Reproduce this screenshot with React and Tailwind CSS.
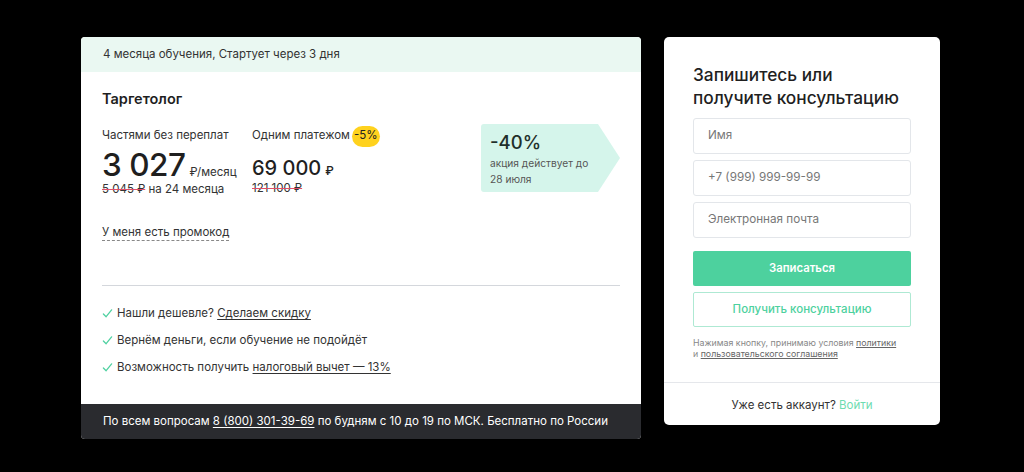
import React from "react";

function Check() {
  return (
    <svg width="11" height="11" viewBox="0 0 12 12" fill="none" className="shrink-0">
      <path d="M1.5 6.5 L4.5 9.5 L10.5 2" stroke="#4fd1a1" strokeWidth="1.4" strokeLinecap="round" strokeLinejoin="round" />
    </svg>
  );
}

export default function App() {
  return (
    <div className="w-[1024px] h-[472px] bg-black flex items-start pt-[37px] pl-[81px] gap-[23px] text-[#222] [font-family:Inter,'Noto_Sans',sans-serif]">
      <div className="w-[560px] h-[402px] bg-white rounded-[4px] overflow-hidden flex flex-col">
        <div className="h-[35px] bg-[#eaf8f2] flex items-center px-[22px] text-[11.5px] text-[#333]">
          4 месяца обучения, Стартует через 3 дня
        </div>
        <div className="flex-1 px-[21px] pt-[17px] flex flex-col">
          <div className="text-[14.5px] font-semibold text-[#1f1f1f] leading-[20px]">Таргетолог</div>
          <div className="flex mt-[18px] h-[68px]">
            <div className="w-[150px]">
              <div className="text-[11.5px] text-[#333] leading-[16px]">Частями без переплат</div>
              <div className="flex items-baseline mt-[3px]">
                <span className="text-[31.5px] font-medium leading-[38px] tracking-[-0.5px] text-[#1f1f1f]">3 027</span>
                <span className="text-[11.5px] ml-[4px] text-[#333]">₽/месяц</span>
              </div>
              <div className="text-[11.5px] leading-[14px] text-[#333] mt-[-2px]">
                <span className="line-through decoration-[#e0506a]">5 045 ₽</span> на 24 месяца
              </div>
            </div>
            <div className="w-[229px]">
              <div className="flex items-center h-[16px] mt-[1px]">
                <span className="text-[11.5px] text-[#333]">Одним платежом</span>
                <span className="ml-[2px] h-[21px] px-[2px] rounded-full bg-[#ffd21e] flex items-center text-[11.5px] text-[#222]">-5%</span>
              </div>
              <div className="flex items-baseline mt-[12px]">
                <span className="text-[20px] font-medium leading-[24px] text-[#1f1f1f]">69 000</span>
                <span className="text-[12px] ml-[4px] font-medium">₽</span>
              </div>
              <div className="text-[11.5px] leading-[14px] text-[#333] mt-[1px]">
                <span className="line-through decoration-[#e0506a]">121 100 ₽</span>
              </div>
            </div>
            <div className="flex items-stretch h-[68px] mt-[-3px]">
              <div className="w-[117px] bg-[#d5f5eb] rounded-l-[3px] pl-[9px] pt-[6px]">
                <div className="text-[18.5px] font-medium leading-[24px] text-[#1f2f2a]">-40%</div>
                <div className="text-[10.2px] leading-[16px] text-[#555] mt-[1px]">акция действует до<br />28 июля</div>
              </div>
              <svg width="22" height="68" viewBox="0 0 22 68" className="block">
                <polygon points="0,0 22,34 0,68" fill="#d5f5eb" />
              </svg>
            </div>
          </div>
          <div className="mt-[29px] text-[11.5px] text-[#333] leading-[16px]">
            <span className="border-b border-dashed border-[#888] pb-[1px]">У меня есть промокод</span>
          </div>
          <div className="mt-[45px] h-px bg-[#d4d7dc] w-[518px]" />
          <div className="mt-[19px] flex flex-col gap-[10px] text-[11.5px] text-[#333] leading-[17px]">
            <div className="flex items-center gap-[4px]"><Check /><span>Нашли дешевле? <span className="underline underline-offset-2">Сделаем скидку</span></span></div>
            <div className="flex items-center gap-[4px]"><Check /><span>Вернём деньги, если обучение не подойдёт</span></div>
            <div className="flex items-center gap-[4px]"><Check /><span>Возможность получить <span className="underline underline-offset-2">налоговый вычет — 13%</span></span></div>
          </div>
        </div>
        <div className="h-[35px] bg-[#2a2b2f] flex items-center px-[22px] text-[11.5px] text-white">
          <span>По всем вопросам <span className="underline underline-offset-2">8 (800) 301-39-69</span> по будням с 10 до 19 по МСК. Бесплатно по России</span>
        </div>
      </div>

      <div className="w-[276px] h-[388px] bg-white rounded-[5px] flex flex-col">
        <div className="px-[29px] pt-[26px]">
          <div className="text-[17.3px] font-medium leading-[23px] text-[#1f1f1f]">Запишитесь или<br />получите консультацию</div>
          <div className="mt-[9px] flex flex-col gap-[6px]">
            <div className="h-[36px] border border-[#e3e6ea] rounded-[3px] flex items-center px-[14px] text-[11.7px] text-[#777]">Имя</div>
            <div className="h-[36px] border border-[#e3e6ea] rounded-[3px] flex items-center px-[14px] text-[11.7px] text-[#777]">+7 (999) 999-99-99</div>
            <div className="h-[36px] border border-[#e3e6ea] rounded-[3px] flex items-center px-[14px] text-[11.7px] text-[#777]">Электронная почта</div>
          </div>
          <div className="mt-[13px] h-[35px] bg-[#4dd19e] rounded-[2px] flex items-center justify-center text-[11.3px] font-semibold text-white">Записаться</div>
          <div className="mt-[6px] h-[35px] border border-[#aee9d3] rounded-[2px] flex items-center justify-center text-[11.5px] font-medium text-[#4dd19e]">Получить консультацию</div>
          <div className="mt-[10px] text-[8.8px] leading-[11px] text-[#888]">
            Нажимая кнопку, принимаю условия <span className="underline text-[#666]">политики</span><br />и <span className="underline text-[#666]">пользовательского соглашения</span>
          </div>
        </div>
        <div className="mt-[23px] h-px bg-[#e5e7eb]" />
        <div className="flex-1 flex items-center justify-center pt-[3px] text-[11.5px] text-[#333]">
          Уже есть аккаунт?&nbsp;<span className="text-[#6ddcb0]">Войти</span>
        </div>
      </div>
    </div>
  );
}
